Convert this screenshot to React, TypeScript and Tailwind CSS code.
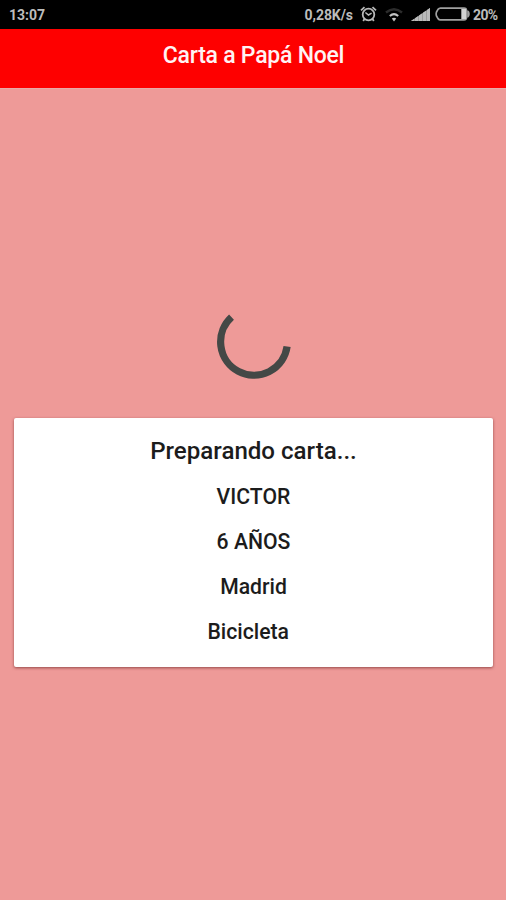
import React from "react";

const letterLines = ["VICTOR", "6 AÑOS", "Madrid", "Bicicleta  "];

function AlarmIcon() {
    return (
        <svg width="17" height="16" viewBox="0 0 17 16" fill="none" stroke="#b8b8b8" strokeWidth="1.8">
            <circle cx="8.5" cy="8.5" r="5.8"/>
            <path d="M1 4.3 4.5 1.2M16 4.3 12.5 1.2M4.6 12.8 3.2 15M12.4 12.8 13.8 15"/>
            <path d="M5.4 6.5 8.5 9 11.6 7.2" strokeWidth="1.5"/>
        </svg>
    )
}

function WifiIcon() {
    return (
        <svg width="18" height="14" viewBox="0 0 18 14" fill="none">
            <path d="M1 4.5Q9-2 17 4.5" stroke="#2c2c2c" strokeWidth="2.4"/>
            <path d="M4.8 8Q9 4.2 13.2 8" stroke="#c4c4c4" strokeWidth="2"/>
            <path d="M9 13.4 6.8 10.6Q9 8.8 11.2 10.6Z" fill="#c4c4c4"/>
        </svg>
    )
}

function SignalIcon() {
    return (
        <svg width="19" height="13" viewBox="0 0 19 13">
            <path d="M0 13 19 0V13Z" fill="#9c9c9c"/>
            <path d="M0 13 3 11V13ZM4 10.3 7 8.3V13H4ZM8 7.5 11 5.5V13H8ZM12 4.8 15 2.7V13H12ZM16 2.1 19 0V13H16Z" fill="#bababa"/>
        </svg>
    )
}

function BatteryIcon() {
    return (
        <svg width="35" height="14" viewBox="0 0 35 14" fill="none">
            <path d="M5.5 1.2H29Q31.5 1.2 31.5 3.7V10.3Q31.5 12.8 29 12.8H5.5Q4 12.8 3 11.6L1.5 9Q.8 7 1.5 5L3 2.4Q4 1.2 5.5 1.2Z" stroke="#a0a0a0" strokeWidth="1.7" strokeLinejoin="round"/>
            <path d="M26.3 2H31V12H26.3Z" fill="#d2d2d2"/>
            <path d="M32.2 3.6H33.2Q34.8 4.2 34.8 7T33.2 10.4H32.2Z" fill="#a0a0a0"/>
        </svg>
    )
}

function Spinner() {
    return (
        <svg width="76" height="76" viewBox="0 0 76 76" fill="none" className="mx-auto">
            <path d="M15.5 13.2A33.4 33.4 0 1 0 71.1 42.6" stroke="#444846" strokeWidth="7.2"/>
        </svg>
    )
}

export default function App() {
    return (
        <div className="flex h-[900px] w-[506px] flex-col overflow-hidden bg-[#ee9a98] font-['Roboto',sans-serif]">
            <div className="flex h-[29px] shrink-0 items-center bg-black pl-[9px] pr-2 text-[14px] font-bold text-[#bcbcbc]">
                <span className="mr-auto pt-px">13:07</span>
                <span className="pt-px tracking-[-0.05px]">0,28K/s</span>
                <div className="ml-[7px] pb-px"><AlarmIcon/></div>
                <div className="ml-[8px]"><WifiIcon/></div>
                <div className="ml-[8px]"><SignalIcon/></div>
                <div className="ml-[5px] pb-px"><BatteryIcon/></div>
                <span className="ml-[3px] w-[25px] pt-px tracking-[-0.6px]">20%</span>
            </div>
            <header className="flex h-[60px] shrink-0 justify-center border-b border-[#e8aaa8] bg-[#fe0000] pt-[11px] pl-px">
                <h1 className="text-[23px] leading-8 font-medium tracking-[-0.24px] text-[#fff3f3]">Carta a Papá Noel</h1>
            </header>
            <main className="flex flex-col pr-[13px] pl-[14px] pt-[215px]">
                <Spinner/>
                <section className="mt-[38px] h-[249px] rounded-[2px] bg-white pt-[17px] text-center font-medium text-[#1c1c1c] shadow-[0_1px_3px_rgba(90,20,20,0.6)]">
                    <h2 className="text-[24.1px] leading-8 font-medium">Preparando carta...</h2>
                    <div className="mt-[6px]">
                        {letterLines.map((line) => (
                            <p key={line} className="h-[45px] text-[21.2px] leading-[47px] whitespace-pre">{line}</p>
                        ))}
                    </div>
                </section>
            </main>
        </div>
    )
}
